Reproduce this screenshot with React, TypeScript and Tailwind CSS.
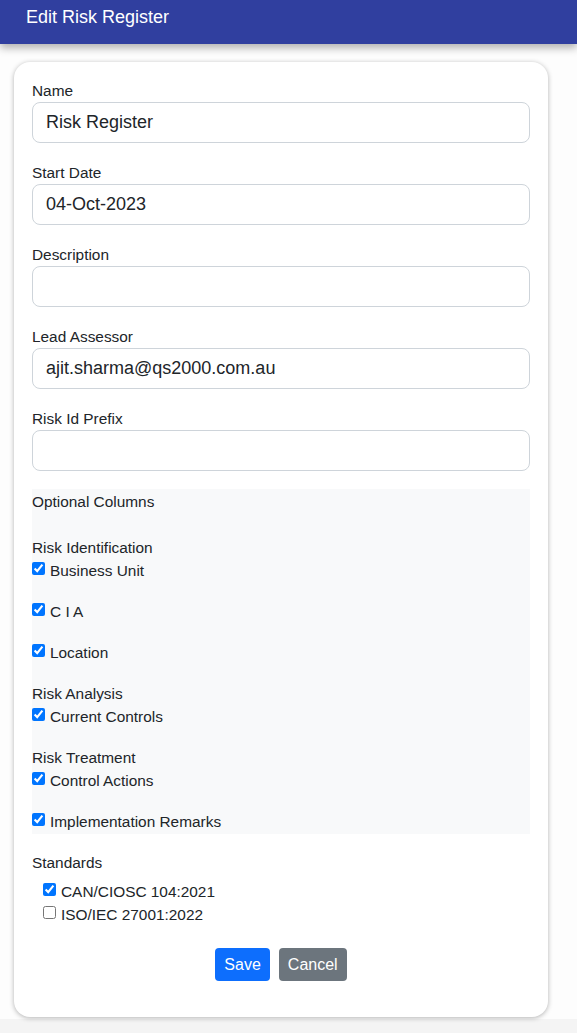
import { useState } from "react";

const fieldList = [
  { label: "Name", value: "Risk Register" },
  { label: "Start Date", value: "04-Oct-2023" },
  { label: "Description", value: "" },
  { label: "Lead Assessor", value: "ajit.sharma@qs2000.com.au" },
  { label: "Risk Id Prefix", value: "" },
];

const columnGroups = [
  { title: "Risk Identification", items: ["Business Unit", "C I A", "Location"] },
  { title: "Risk Analysis", items: ["Current Controls"] },
  { title: "Risk Treatment", items: ["Control Actions", "Implementation Remarks"] },
];

function Check({ label, checked, onChange }: { label: string; checked: boolean; onChange: () => void }) {
  return (
    <label className="flex items-start text-[15.4px] leading-[20px] text-[#212529]">
      <input
        type="checkbox"
        checked={checked}
        onChange={onChange}
        className="mt-[1px] mr-[5px] h-[13px] w-[13px] shrink-0"
      />
      {label}
    </label>
  );
}

export default function App() {
  const [values, setValues] = useState(fieldList.map((f) => f.value));
  const [cols, setCols] = useState<Record<string, boolean>>(
    Object.fromEntries(columnGroups.flatMap((g) => g.items).map((i) => [i, true])),
  );
  const [stds, setStds] = useState({ "CAN/CIOSC 104:2021": true, "ISO/IEC 27001:2022": false } as Record<string, boolean>);

  return (
    <div className="min-h-[1033px] bg-[#f4f4f4] font-['Liberation_Sans',Arial,sans-serif]">
      <div className="bg-[#fdfdfd] pb-[2px]">
        <header className="relative z-10 h-[44px] bg-[#303f9f] pl-[26px] shadow-[0_4px_8px_rgba(0,0,0,0.3)]">
          <h1 className="pt-[6px] text-[18px] leading-[22px] text-white">Edit Risk Register</h1>
        </header>

        <div className="mx-[14px] mt-[18px] w-[534px] rounded-[16px] bg-white px-[18px] pt-[19px] pb-[36px] shadow-[0_1px_5px_rgba(0,0,0,0.3)]">
          <div className="flex flex-col gap-[20px]">
            {fieldList.map((f, i) => (
              <div key={f.label}>
                <div className="mb-[1px] text-[15.4px] leading-[20px] text-[#212529]">{f.label}</div>
                <input
                  value={values[i]}
                  onChange={(e) => setValues(values.map((v, j) => (j === i ? e.target.value : v)))}
                  className="h-[41px] w-full rounded-[8px] border border-[#ced4da] bg-white px-[13px] text-[18px] text-[#212529] outline-none"
                />
              </div>
            ))}
          </div>

          <div className="mt-[18px] bg-[#f8f9fa] pt-[3px] pb-[2px]">
            <div className="text-[15.4px] leading-[20px] text-[#212529]">Optional Columns</div>
            {columnGroups.map((g, gi) => (
              <div key={g.title} className={gi === 0 ? "mt-[26px]" : "mt-[21px]"}>
                <div className="text-[15.4px] leading-[20px] text-[#212529]">{g.title}</div>
                <div className="mt-[3px] flex flex-col gap-[21px]">
                  {g.items.map((item) => (
                    <Check
                      key={item}
                      label={item}
                      checked={cols[item]}
                      onChange={() => setCols({ ...cols, [item]: !cols[item] })}
                    />
                  ))}
                </div>
              </div>
            ))}
          </div>

          <div className="mt-[19px] text-[15.4px] leading-[20px] text-[#212529]">Standards</div>
          <div className="mt-[9px] flex flex-col gap-[3px] pl-[11px]">
            {Object.keys(stds).map((s) => (
              <Check key={s} label={s} checked={stds[s]} onChange={() => setStds({ ...stds, [s]: !stds[s] })} />
            ))}
          </div>

          <div className="mt-[23px] flex justify-center gap-[9px]">
            <button className="h-[33px] rounded-[4px] bg-[#0d6efd] px-[9px] text-[16px] text-white">Save</button>
            <button className="h-[33px] rounded-[4px] bg-[#6c757d] px-[9px] text-[16px] text-white">Cancel</button>
          </div>
        </div>
      </div>
    </div>
  );
}
